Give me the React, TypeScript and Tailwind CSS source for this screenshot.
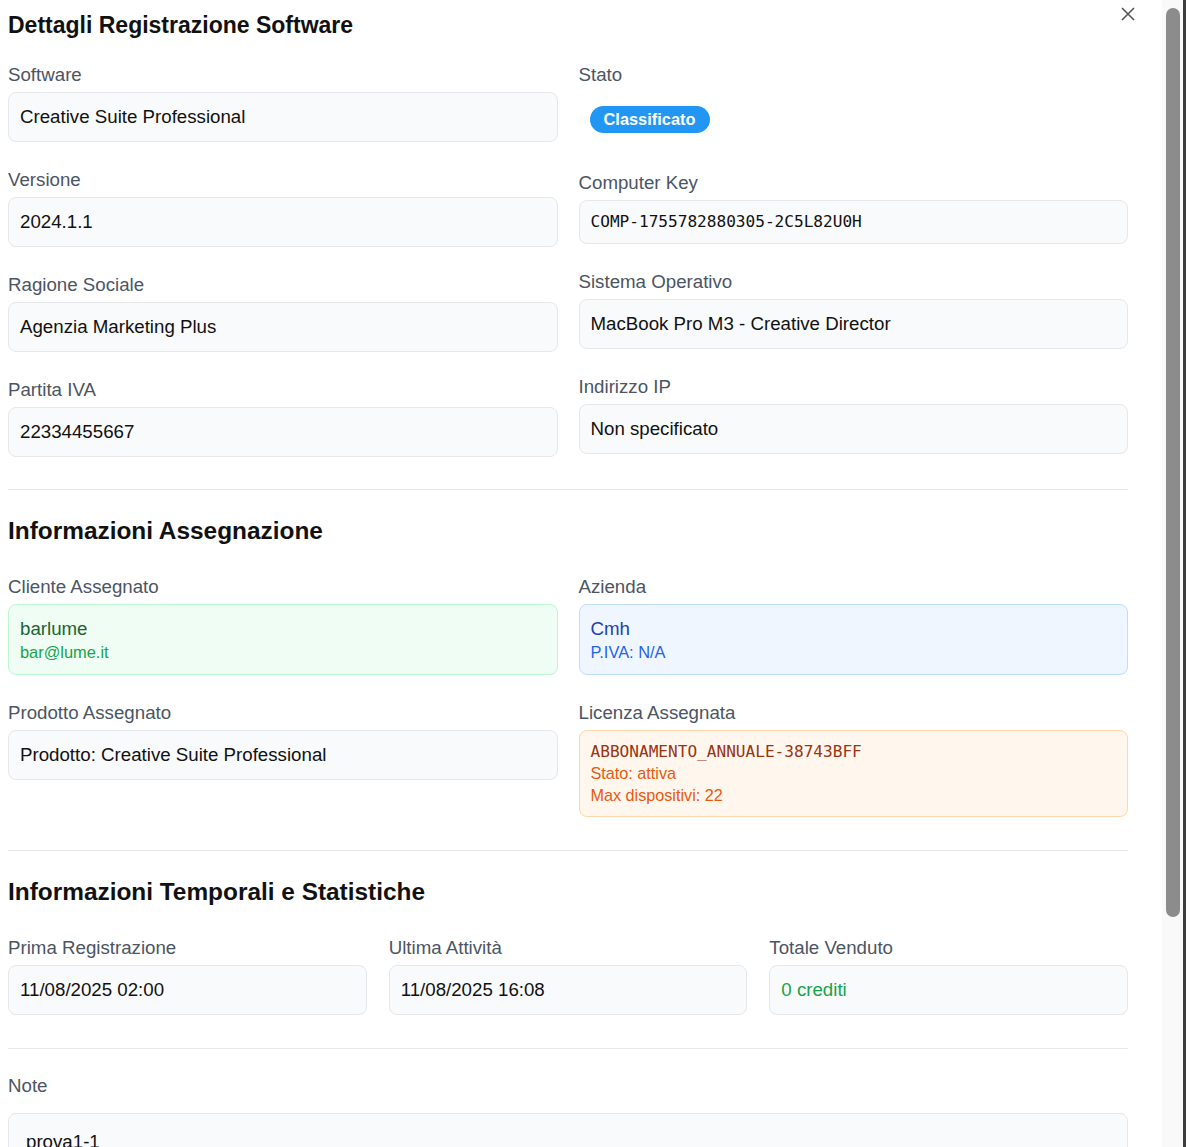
import React from 'react';

const sans = { fontFamily: '"Liberation Sans", Arial, sans-serif' };

// Campo semplice: etichetta + riquadro grigio
function Field({ label, children, mono }: { label: string; children: React.ReactNode; mono?: boolean }) {
  return (
    <div>
      <div className="text-[18.7px] leading-[22px] text-[#4b5563] mb-[6px]">{label}</div>
      <div
        className={
          mono
            ? 'bg-[#f9fafb] border border-[#e5e7eb] rounded-[8px] px-[11px] py-[11px] text-[16.1px] leading-[20px] text-[#111] font-["DejaVu_Sans_Mono",monospace]'
            : 'bg-[#f9fafb] border border-[#e5e7eb] rounded-[8px] px-[11px] py-[12px] text-[18.7px] leading-[24px] text-[#111]'
        }
      >
        {children}
      </div>
    </div>
  );
}

function Label({ children }: { children: React.ReactNode }) {
  return <div className="text-[18.7px] leading-[22px] text-[#4b5563] mb-[6px]">{children}</div>;
}

function SectionTitle({ children }: { children: React.ReactNode }) {
  return <h2 className="text-[24.4px] leading-[30px] font-bold text-[#111] mt-[26px] mb-[30px]">{children}</h2>;
}

export default function App() {
  return (
    <div className="w-full h-[1147px] flex bg-white border-r-[3px] border-[#3d3d3d] overflow-hidden" style={sans}>
      <div className="w-[1162px] shrink-0 overflow-hidden">
        <div className="relative pl-[8px] pr-[34px]">
          {/* Chiudi */}
          <button className="absolute top-[7px] right-[27px] w-[14px] h-[14px]">
            <svg width="14" height="14" viewBox="0 0 14 14" fill="none" stroke="#555" strokeWidth="1.6">
              <path d="M1 1L13 13M13 1L1 13" />
            </svg>
          </button>

          <h1 className="text-[23px] leading-[30px] font-bold text-[#111] pt-[10px] mb-[24px]">
            Dettagli Registrazione Software
          </h1>

          {/* Dati principali */}
          <div className="grid grid-cols-2 gap-x-[21px] items-start">
            <div className="flex flex-col gap-[27px]">
              <Field label="Software">Creative Suite Professional</Field>
              <Field label="Versione">2024.1.1</Field>
              <Field label="Ragione Sociale">Agenzia Marketing Plus</Field>
              <Field label="Partita IVA">22334455667</Field>
            </div>
            <div className="flex flex-col gap-[27px]">
              <div>
                <Label>Stato</Label>
                <div className="pt-[14px] pb-[12px] px-[11px]">
                  <span className="inline-flex items-center h-[27px] px-[14px] rounded-full bg-[#2196f3] text-white font-bold text-[16.4px]">
                    Classificato
                  </span>
                </div>
              </div>
              <Field label="Computer Key" mono>COMP-1755782880305-2C5L82U0H</Field>
              <Field label="Sistema Operativo">MacBook Pro M3 - Creative Director</Field>
              <Field label="Indirizzo IP">Non specificato</Field>
            </div>
          </div>

          <div className="h-px bg-[#e5e7eb] mt-[32px]" />

          <SectionTitle>Informazioni Assegnazione</SectionTitle>
          <div className="grid grid-cols-2 gap-x-[21px] gap-y-[27px] items-start">
            <div>
              <Label>Cliente Assegnato</Label>
              <div className="bg-[#f0fdf4] border border-[#bbf7d0] rounded-[8px] px-[11px] pt-[12px] pb-[11px]">
                <div className="text-[18.7px] leading-[24px] text-[#166534]">barlume</div>
                <div className="text-[16.4px] leading-[22px] text-[#16a34a]">bar@lume.it</div>
              </div>
            </div>
            <div>
              <Label>Azienda</Label>
              <div className="bg-[#eff6ff] border border-[#bfdbfe] rounded-[8px] px-[11px] pt-[12px] pb-[11px]">
                <div className="text-[18.7px] leading-[24px] text-[#1e40af]">Cmh</div>
                <div className="text-[16.4px] leading-[22px] text-[#2563eb]">P.IVA: N/A</div>
              </div>
            </div>
            <Field label="Prodotto Assegnato">Prodotto: Creative Suite Professional</Field>
            <div>
              <Label>Licenza Assegnata</Label>
              <div className="bg-[#fff7ed] border border-[#fed7aa] rounded-[8px] px-[11px] pt-[11px] pb-[10px]">
                <div className='text-[16.1px] leading-[20px] text-[#9a3412] font-["DejaVu_Sans_Mono",monospace]'>
                  ABBONAMENTO_ANNUALE-38743BFF
                </div>
                <div className="text-[16.2px] leading-[22px] text-[#ea580c]">Stato: attiva</div>
                <div className="text-[16.2px] leading-[22px] text-[#ea580c]">Max dispositivi: 22</div>
              </div>
            </div>
          </div>

          <div className="h-px bg-[#e5e7eb] mt-[33px]" />

          <SectionTitle>Informazioni Temporali e Statistiche</SectionTitle>
          <div className="grid grid-cols-3 gap-x-[22px]">
            <Field label="Prima Registrazione">11/08/2025 02:00</Field>
            <Field label="Ultima Attività">11/08/2025 16:08</Field>
            <Field label="Totale Venduto">
              <span className="text-[#16a34a]">0 crediti</span>
            </Field>
          </div>

          <div className="h-px bg-[#e5e7eb] mt-[33px]" />

          <div className="mt-[26px]">
            <div className="text-[18.7px] leading-[22px] text-[#4b5563] mb-[16px]">Note</div>
            <div className="bg-[#f9fafb] border border-[#e5e7eb] rounded-[8px] px-[17px] pt-[16px] pb-[16px] text-[18.7px] leading-[24px] text-[#111]">
              prova1-1
            </div>
          </div>
        </div>
      </div>

      {/* Barra di scorrimento */}
      <div className="w-[21px] shrink-0 bg-[#f9f9f9] pt-[8px] pl-[4px] pr-[3px]">
        <div className="h-[909px] rounded-full bg-[#8c8c8c]" />
      </div>
    </div>
  );
}
